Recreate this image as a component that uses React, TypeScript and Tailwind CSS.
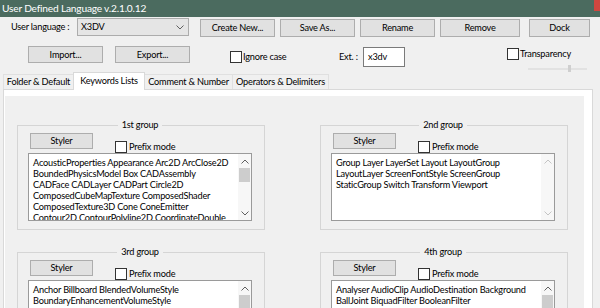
import * as React from 'react'
import clsx from 'clsx'

const groups = [
  {
    title: '1st group',
    lines: [
      'AcousticProperties Appearance Arc2D ArcClose2D',
      'BoundedPhysicsModel Box CADAssembly',
      'CADFace CADLayer CADPart Circle2D',
      'ComposedCubeMapTexture ComposedShader',
      'ComposedTexture3D Cone ConeEmitter',
      'Contour2D ContourPolyline2D CoordinateDouble',
    ],
    scroll: true,
  },
  {
    title: '2nd group',
    lines: [
      'Group Layer LayerSet Layout LayoutGroup',
      'LayoutLayer ScreenFontStyle ScreenGroup',
      'StaticGroup Switch Transform Viewport',
    ],
    scroll: false,
  },
  {
    title: '3rd group',
    lines: [
      'Anchor Billboard BlendedVolumeStyle',
      'BoundaryEnhancementVolumeStyle',
      'CartoonVolumeStyle Collision CollisionCollection',
      'CollisionSensor CollisionSpace Contact',
      'DirectionalLight DoubleAxisHingeJoint',
      'EdgeEnhancementVolumeStyle EspduTransform',
    ],
    scroll: true,
  },
  {
    title: '4th group',
    lines: [
      'Analyser AudioClip AudioDestination Background',
      'BallJoint BiquadFilter BooleanFilter',
      'BooleanSequencer BooleanToggle BooleanTrigger',
      'BoundedPhysicsModel BufferAudioSource',
      'CADAssembly CADFace CADLayer CADPart',
      'ChannelMerger ChannelSelector ChannelSplitter',
    ],
    scroll: true,
  },
]

function Btn({ children, className }: { children: React.ReactNode; className?: string }) {
  return (
    <div
      className={clsx(
        'flex shrink-0 items-center justify-center border border-[#adadad] bg-[#e1e1e1] whitespace-nowrap',
        className,
      )}
    >
      {children}
    </div>
  )
}

function Check({ className }: { className?: string }) {
  return <span className={clsx('block size-[12px] shrink-0 border border-[#333333] bg-white', className)} />
}

function Chevron({ up, disabled }: { up?: boolean; disabled?: boolean }) {
  return (
    <svg width="8" height="5" viewBox="0 0 8 5" className="block">
      <path
        d={up ? 'M0.5 4.5 L4 1 L7.5 4.5' : 'M0.5 0.5 L4 4 L7.5 0.5'}
        fill="none"
        stroke={disabled ? '#c4c4c4' : '#606060'}
        strokeWidth="1"
      />
    </svg>
  )
}

function ListBox({ lines, scroll }: { lines: string[]; scroll: boolean }) {
  return (
    <div className="flex h-[68px] border border-[#9a9a9a] bg-white">
      <div className="flex-1 overflow-hidden pt-[3px] pl-[4px] leading-[11px]">
        {lines.map((line) => (
          <div key={line} className="whitespace-nowrap">
            {line}
          </div>
        ))}
      </div>
      <div className="flex w-[13px] shrink-0 flex-col bg-[#f7f7f7]">
        <div className="flex h-[14px] items-center justify-center">
          <Chevron up disabled={!scroll} />
        </div>
        {scroll && <div className="mx-[1px] h-[14px] bg-[#cdcdcd]" />}
        <div className="mt-auto flex h-[14px] items-center justify-center">
          <Chevron disabled={!scroll} />
        </div>
      </div>
    </div>
  )
}

function GroupBox({ title, lines, scroll }: { title: string; lines: string[]; scroll: boolean }) {
  return (
    <fieldset className="min-w-0 border border-[#d5d5d5] pr-[12px] pb-[8px] pl-[10px]">
      <legend align="center" className="mx-auto px-[4px] leading-[12px]">
        {title}
      </legend>
      <div className="flex h-[19px] items-start pt-[2px]">
        <Btn className="ml-[2px] h-[16px] w-[63px]">Styler</Btn>
        <Check className="mt-[8px] ml-[22px]" />
        <span className="mt-[8px] ml-[2px] leading-[12px] whitespace-nowrap">Prefix mode</span>
      </div>
      <div className="mt-[3px]">
        <ListBox lines={lines} scroll={scroll} />
      </div>
    </fieldset>
  )
}

export default function App() {
  return (
    <div className="h-[308px] w-[600px] overflow-hidden bg-[#f0f0f0] font-['Lato','Liberation_Sans',sans-serif] text-[9.2px] leading-[12px] tracking-[-0.2px] text-black">
      {/* title bar */}
      <div className="flex h-[17px] items-start bg-[#4b6b5f]">
        <span className="pt-[2px] pl-[2px] text-[10.2px] whitespace-nowrap text-white">
          User Defined Language v.2.1.0.12
        </span>
        <span className="ml-auto h-[11px] w-[6px] bg-[#cf463f]" />
      </div>

      {/* language row */}
      <div className="mt-[1px] flex h-[19px] items-start pl-[11px]">
        <span className="mt-[3px] w-[66px] shrink-0 whitespace-nowrap">User language :</span>
        <div className="flex h-[18px] w-[112px] shrink-0 items-center border border-[#acacac] bg-[#e5e5e5] pl-[3px]">
          <span>X3DV</span>
          <span className="mr-[4px] ml-auto">
            <Chevron />
          </span>
        </div>
        <Btn className="mt-[1px] ml-[11px] h-[18px] w-[75px]">Create New...</Btn>
        <Btn className="mt-[1px] ml-[5px] h-[18px] w-[75px]">Save As...</Btn>
        <Btn className="mt-[1px] ml-[5px] h-[18px] w-[75px]">Rename</Btn>
        <Btn className="mt-[1px] ml-[5px] h-[18px] w-[80px]">Remove</Btn>
        <Btn className="mt-[1px] ml-[9px] h-[18px] w-[61px]">Dock</Btn>
      </div>

      {/* import row */}
      <div className="mt-[9px] flex h-[24px] items-start pl-[28px]">
        <Btn className="h-[17px] w-[75px]">Import...</Btn>
        <Btn className="ml-[12px] h-[17px] w-[75px]">Export...</Btn>
        <div className="mt-[5px] ml-[40px] flex w-[109px] shrink-0 items-center">
          <Check />
          <span className="ml-[1px] whitespace-nowrap">Ignore case</span>
        </div>
        <span className="mt-[5px] w-[24px] shrink-0 whitespace-nowrap">Ext. :</span>
        <div className="mt-[1px] flex h-[20px] w-[42px] shrink-0 items-center border border-[#7a7a7a] bg-white pl-[4px]">
          x3dv
        </div>
        <div className="mt-[2px] ml-[102px] flex flex-col">
          <div className="flex items-center">
            <Check />
            <span className="ml-[1px] whitespace-nowrap">Transparency</span>
          </div>
          <div className="mt-[5px] ml-[21px] flex h-[7px] w-[59px] items-center">
            <div className="h-[2px] flex-1 border-y border-[#e2e2e2] bg-[#ececec]" />
            <div className="h-[7px] w-[3px] bg-[#cfcfcf]" />
            <div className="h-[2px] w-[16px] border-y border-[#e2e2e2] bg-[#ececec]" />
          </div>
        </div>
      </div>

      {/* tabs */}
      <div className="mt-[2px] flex h-[17px] items-end pl-[3px] whitespace-nowrap">
        <div className="flex h-[15px] w-[70px] items-center justify-center border-t border-l border-[#e0e0e0]">
          Folder &amp; Default
        </div>
        <div className="relative z-10 -mb-[1px] flex h-[18px] w-[72px] items-center justify-center border-x border-t border-[#d9d9d9] bg-white pb-[2px]">
          Keywords Lists
        </div>
        <div className="flex h-[15px] w-[88px] items-center justify-center border-t border-r border-[#e0e0e0]">
          Comment &amp; Number
        </div>
        <div className="flex h-[15px] w-[96px] items-center justify-center border-t border-r border-[#e0e0e0]">
          Operators &amp; Delimiters
        </div>
      </div>

      {/* tab page */}
      <div className="ml-[3px] h-[300px] w-[590px] border border-[#d9d9d9] bg-white pt-[6px] pl-[1px]">
        <div className="h-[300px] w-[579px] bg-[#f0f0f0] pt-[23px] pl-[12px]">
          <div className="grid grid-cols-[248px_248px] gap-x-[55px] gap-y-[16px]">
            {groups.map((g) => (
              <GroupBox key={g.title} title={g.title} lines={g.lines} scroll={g.scroll} />
            ))}
          </div>
        </div>
      </div>
    </div>
  )
}
